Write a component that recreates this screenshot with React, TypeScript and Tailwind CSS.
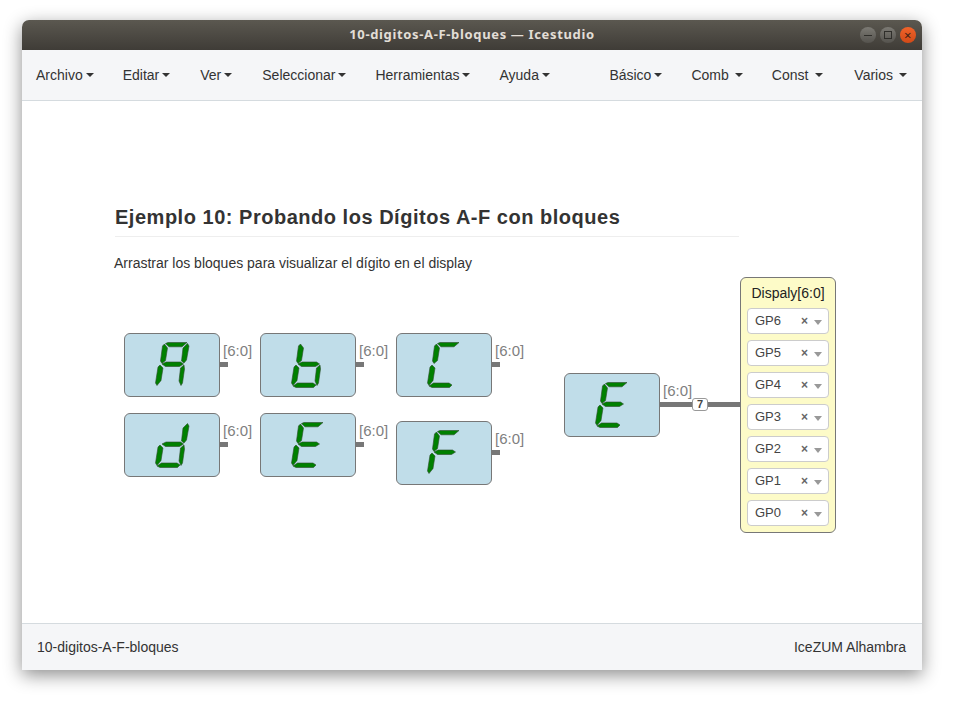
const segments: Record<string, string> = {
  a: '41.5,10.5 44,9.5 63,9.5 58,13.8 45,13.8',
  b: '63.5,10.5 65,13 62.5,27 60,30 57.5,28 59,15',
  c: '60,32 60.5,36 58.5,50 57,52.5 55,48 56.5,35',
  d: '33,53 37.5,50 53,50 56,52 53.5,54.5 36,54.5',
  e: '36,32 39,35 37,47.5 33,52.5 31.5,50 34,34',
  f: '40.5,11 43.5,15 41.5,27.5 38,30.5 36.5,28 38.5,13',
  g: '38,31 42,29 56.5,29 59.5,31 55.5,33.5 41.5,33.5',
};

const digits: Record<string, string> = {
  A: 'abcefg',
  b: 'cdefg',
  C: 'adef',
  d: 'bcdeg',
  E: 'adefg',
  F: 'aefg',
};

function Digit({ char }: { char: string }) {
  return (
    <svg viewBox="0 0 96 64" className="absolute -left-px -top-px w-[96px] h-[64px]">
      {digits[char].split('').map((s) => (
        <polygon key={s} points={segments[s]} fill="#008000" stroke="#2b4a2b" strokeWidth="0.6" />
      ))}
    </svg>
  );
}

function Block({ char, className }: { char: string; className: string }) {
  return (
    <div className={`absolute w-[96px] h-[64px] rounded-[6px] border border-[#777] bg-[#c0dde9] ${className}`}>
      <Digit char={char} />
      <div className="absolute left-[95px] top-[28px] w-[8px] h-[5px] bg-[#777]" />
      <span className="absolute left-[98px] top-[7px] leading-5 text-[15px] text-[#808080]">[6:0]</span>
    </div>
  );
}

function Pin({ name }: { name: string }) {
  return (
    <div className="flex items-center h-[26px] rounded-[4px] border border-[#ccc] bg-white pl-[7px] pr-[6px] text-[13px] text-[#444]">
      <span className="flex-1">{name}</span>
      <span className="text-[12px] font-bold leading-none text-[#666]">×</span>
      <span className="ml-[6px] mt-[2px] border-x-[4px] border-t-[5px] border-x-transparent border-t-[#999]" />
    </div>
  );
}

function MenuItem({ label, caret, className }: { label: string; caret: string; className?: string }) {
  return (
    <div className={`flex items-center ${className ?? ''}`}>
      <span>{label}</span>
      <span className={`${caret} border-x-[4px] border-t-[4px] border-x-transparent border-t-[#333]`} />
    </div>
  );
}

export default function App() {
  return (
    <div className="w-[953px] h-[703px] bg-white pt-[20px] pl-[22px] overflow-hidden font-['Liberation_Sans',sans-serif]">
      <div className="w-[900px] h-[650px] flex flex-col bg-white rounded-t-[7px] shadow-[0_5px_18px_rgba(0,0,0,0.45)]">
        {/* barra de titulo */}
        <div className="relative h-[30px] flex items-center justify-center rounded-t-[7px] bg-gradient-to-b from-[#5b5850] to-[#3f3c37] font-['Noto_Sans',sans-serif] text-[13px] font-bold tracking-[0.65px] text-[#e2ded6]">
          10-digitos-A-F-bloques — Icestudio
          <div className="absolute right-[6px] top-[7px] flex gap-[4px]">
            <div className="w-[16px] h-[16px] rounded-full bg-gradient-to-b from-[#7c7a74] to-[#55534e] flex items-center justify-center">
              <div className="w-[8px] h-[1px] bg-[#2f2e2a]" />
            </div>
            <div className="w-[16px] h-[16px] rounded-full bg-gradient-to-b from-[#7c7a74] to-[#55534e] flex items-center justify-center">
              <div className="w-[8px] h-[8px] border border-[#2f2e2a]" />
            </div>
            <div className="w-[16px] h-[16px] rounded-full bg-gradient-to-b from-[#f0632a] to-[#d24a17] flex items-center justify-center text-[13px] font-normal leading-none text-[#3d2015]">
              ×
            </div>
          </div>
        </div>

        {/* menu */}
        <div className="h-[51px] flex items-center border-b border-[#d5dbdf] bg-[#f5f6f8] pl-[14px] pr-[15px] text-[14px] text-[#333]">
          <div className="flex gap-[29px]">
            <MenuItem label="Archivo" caret="ml-[3px]" />
            <MenuItem label="Editar" caret="ml-[3px]" className="mr-px" />
            <MenuItem label="Ver" caret="ml-[3px]" className="mr-px" />
            <MenuItem label="Seleccionar" caret="ml-[3px]" />
            <MenuItem label="Herramientas" caret="ml-[3px]" />
            <MenuItem label="Ayuda" caret="ml-[3px]" />
          </div>
          <div className="ml-auto flex gap-[29px]">
            <MenuItem label="Básico" caret="ml-[3px]" />
            <MenuItem label="Comb" caret="ml-[6px]" />
            <MenuItem label="Const" caret="ml-[7px]" className="mr-[2px]" />
            <MenuItem label="Varios" caret="ml-[6px]" />
          </div>
        </div>

        {/* lienzo */}
        <div className="relative flex-1 pl-[93px] pt-[105px]">
          <div className="w-[624px] border-b border-[#eee] pb-[8px] text-[20px] leading-[22px] font-bold tracking-[0.52px] text-[#333]">
            Ejemplo 10: Probando los Dígitos A-F con bloques
          </div>
          <p className="mt-[16px] -ml-[1px] text-[14px] leading-5 text-[#333]">
            Arrastrar los bloques para visualizar el dígito en el display
          </p>

          <Block char="A" className="left-[102px] top-[232px]" />
          <Block char="b" className="left-[238px] top-[232px]" />
          <Block char="C" className="left-[374px] top-[232px]" />
          <Block char="d" className="left-[102px] top-[312px]" />
          <Block char="E" className="left-[238px] top-[312px]" />
          <Block char="F" className="left-[374px] top-[320px]" />

          {/* bloque conectado al display */}
          <Block char="E" className="left-[542px] top-[272px]" />
          <div className="absolute left-[638px] top-[301px] w-[80px] h-[5px] bg-[#777]" />
          <div className="absolute left-[670px] top-[297px] w-[16px] h-[13px] flex items-center justify-center rounded-[3px] border border-[#999] bg-white text-[11px] font-bold leading-none text-[#444]">
            7
          </div>

          <div className="absolute left-[718px] top-[176px] w-[96px] h-[256px] flex flex-col rounded-[6px] border border-[#777] bg-[#fdfbc8] px-[6px]">
            <div className="h-[30px] flex items-center justify-center text-[14px] text-[#222]">Dispaly[6:0]</div>
            <div className="flex flex-col gap-[6px]">
              {['GP6', 'GP5', 'GP4', 'GP3', 'GP2', 'GP1', 'GP0'].map((p) => (
                <Pin key={p} name={p} />
              ))}
            </div>
          </div>
        </div>

        {/* pie */}
        <div className="h-[47px] flex items-center justify-between border-t border-[#d5dbdf] bg-[#f5f6f8] pl-[15px] pr-[16px] text-[14px] text-[#333]">
          <span>10-digitos-A-F-bloques</span>
          <span>IceZUM Alhambra</span>
        </div>
      </div>
    </div>
  );
}
